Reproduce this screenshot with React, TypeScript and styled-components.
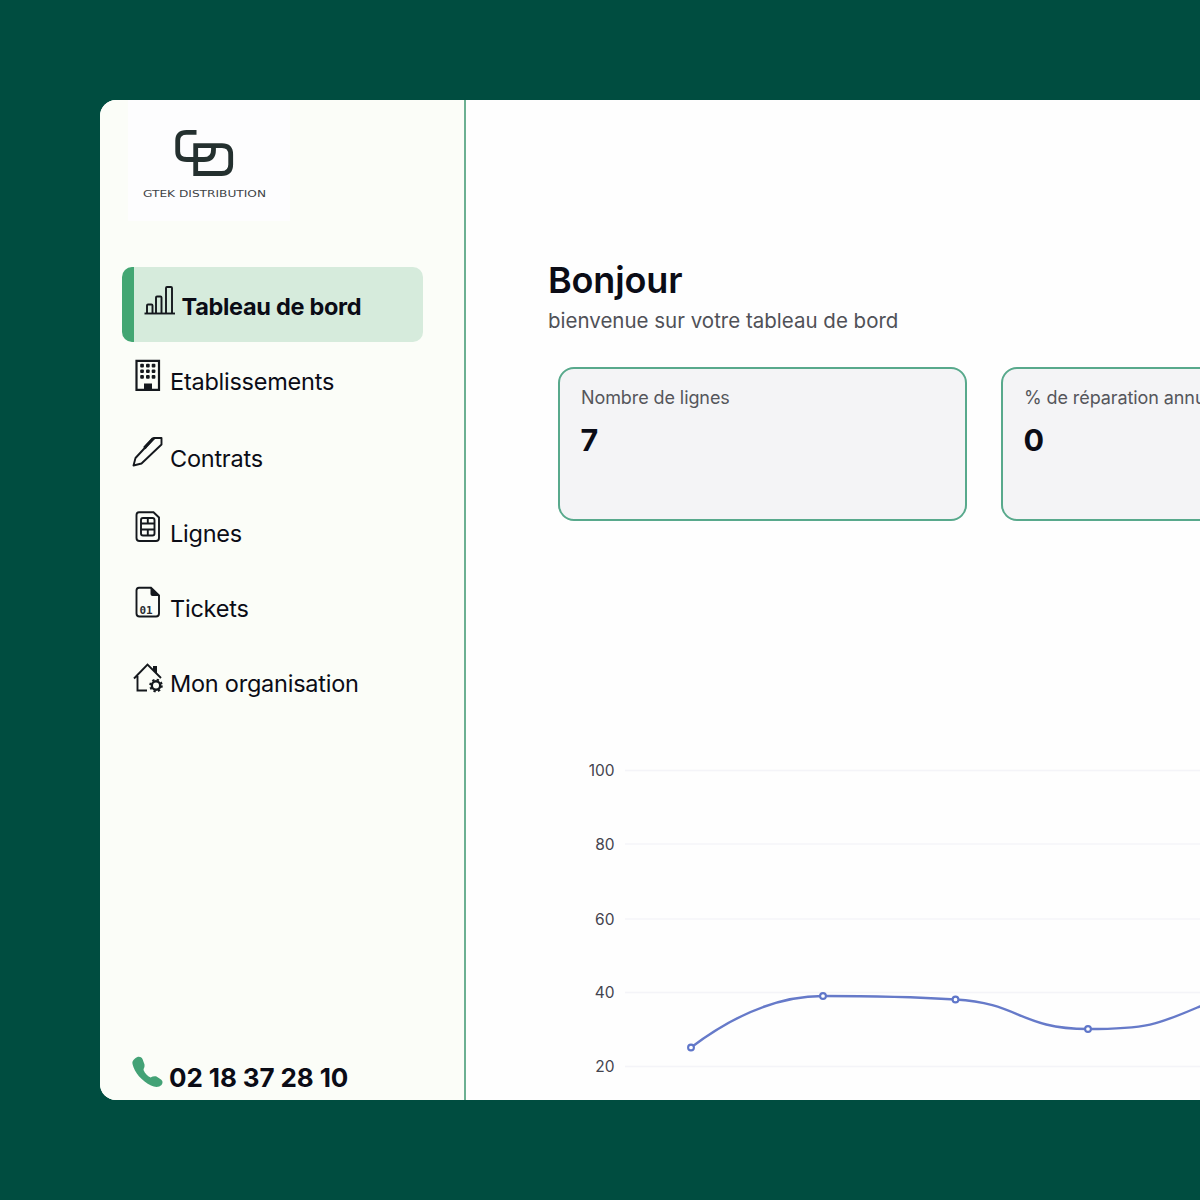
import React from "react";
import styled, { createGlobalStyle, css } from "styled-components";

const GlobalStyle = createGlobalStyle`
  *, *::before, *::after { box-sizing: border-box; }
  body {
    margin: 0;
    background: #004d40;
    font-family: Inter, "Liberation Sans", sans-serif;
    color: #0b0c16;
  }
`;

const Stage = styled.div`
  width: 100%;
  height: 1200px;
  padding: 100px 0 100px 100px;
  overflow: hidden;
  background: #004d40;
`;

const Window = styled.div`
  display: flex;
  height: 1000px;
  border-radius: 16px 0 0 16px;
  overflow: hidden;
  background: #fefefe;
`;

const Sidebar = styled.aside`
  display: flex;
  flex-direction: column;
  flex: none;
  width: 366px;
  background: #fbfdf8;
  border-right: 2px solid #6cb092;
`;

const LogoPanel = styled.div`
  width: 162px;
  height: 121px;
  margin-left: 28px;
  background: #fdfdfe;
`;

const Nav = styled.nav`
  display: flex;
  flex-direction: column;
  margin: 46px 41px 0 22px;
`;

const NavItem = styled.a<{ $active?: boolean }>`
  display: flex;
  align-items: center;
  height: 75.5px;
  padding-left: 10px;
  gap: 7px;
  font-size: 23.5px;
  letter-spacing: -0.24px;
  white-space: nowrap;
  ${(p) =>
    p.$active &&
    css`
      height: 75px;
      padding-bottom: 1px;
      gap: 6.5px;
      border-left: 12px solid #43a673;
      border-radius: 10px;
      background: #d6ebdc;
      font-weight: 700;
      letter-spacing: -0.3px;
    `}
`;

const NavIcon = styled.svg`
  flex: none;
  width: 31px;
  height: 32px;
  margin-bottom: 9px;
  overflow: visible;
  fill: none;
  stroke: #14181d;
  stroke-width: 1.9;
`;

const NavLabel = styled.span<{ $drop?: number }>`
  padding-top: ${(p) => 5 + (p.$drop ?? 0) * 2}px;
  line-height: 30px;
`;

const Phone = styled.div`
  display: flex;
  align-items: center;
  gap: 6px;
  margin-top: auto;
  padding: 0 0 0 32px;
  font-size: 26px;
  line-height: 32px;
  font-weight: 700;
  letter-spacing: -0.1px;
`;

const PhoneIcon = styled.svg`
  flex: none;
  width: 31px;
  height: 32px;
  margin-bottom: 12px;
  fill: #43a276;
`;

const Main = styled.main`
  display: flex;
  flex-direction: column;
  flex: 1;
  min-width: 0;
  padding: 157.5px 0 0 82px;
`;

const Title = styled.h1`
  margin: 0;
  font-size: 36px;
  line-height: 44px;
  font-weight: 600;
  letter-spacing: -0.15px;
`;

const Subtitle = styled.p`
  margin: 6.5px 0 0;
  font-size: 20.5px;
  line-height: 26px;
  letter-spacing: 0;
  color: #505157;
`;

const Cards = styled.div`
  display: flex;
  gap: 34px;
  margin: 33px 0 0 10px;
`;

const Card = styled.section`
  flex: none;
  width: 409px;
  height: 154px;
  padding: 18px 21px;
  border: 2px solid #58a98c;
  border-radius: 16px;
  background: #f4f4f6;
`;

const CardLabel = styled.div`
  font-size: 18px;
  line-height: 22px;
  letter-spacing: -0.09px;
  white-space: nowrap;
  color: #55565b;
`;

const CardValue = styled.div`
  margin-top: 11px;
  font-size: 30.5px;
  line-height: 40px;
  font-weight: 700;
  margin-left: -0.5px;
`;

const Chart = styled.svg`
  flex: none;
  display: block;
  width: 652px;
  height: 350px;
  margin-top: 229px;
  font-size: 15.5px;
`;

const Logo = () => (
  <svg width="162" height="121" viewBox="128 100 162 121">
    <g fill="none" stroke="#24302f" strokeWidth="4.800">
      <path d="M196.500 132.300H186.500Q177.700 132.300 177.700 140.500V151.500Q177.700 159.500 187 159.500H204Q213.500 159.500 213.500 150V146" />
      <path d="M195.700 145.700H222Q230.700 145.700 230.700 154.500V164.500Q230.700 173.500 221.500 173.500H195.700Z" />
    </g>
    <text
      x="143"
      y="196.600"
      fontSize="8.600"
      fontFamily="DejaVu Sans, sans-serif"
      fill="#3f4347"
      textLength="123"
      lengthAdjust="spacingAndGlyphs"
    >
      GTEK DISTRIBUTION
    </text>
  </svg>
);

const icons = {
  chart: (
    <>
      <path d="M0.500 29.500H31" />
      <path d="M3 29V21.500Q3 20.500 4 20.500H7.500Q8.500 20.500 8.500 21.500V29M12 29V13.500Q12 12.500 13 12.500H16.500Q17.500 12.500 17.500 13.500V29M22 29V4Q22 3 23 3H27Q28 3 28 4V29" />
    </>
  ),
  building: (
    <>
      <path d="M4.500 1.800H27V30.800H4.500Z" strokeWidth="2.200" />
      <g fill="#14181d" stroke="none">
        {[4.7, 10.4, 16.1].map((y) =>
          [8.2, 14, 19.7].map((x) => <rect key={`${x}-${y}`} x={x} y={y} width="3.700" height="3.700" rx="1" />)
        )}
        <path d="M12 24.500H20V31H12Z" />
      </g>
    </>
  ),
  pen: (
    <>
      <path d="M1.500 30.500L3.500 23L22 3H29.500V9.500L9.500 28.500Z" strokeLinejoin="round" />
      <path d="M14 13.500L12.500 12L20.500 3.500H23" />
      <path d="M13 12.500L21 4" strokeWidth="2.600" />
    </>
  ),
  sim: (
    <>
      <path d="M7 2.200H21.500L27 7.500V28Q27 31 24 31H7.500Q4.500 31 4.500 28V5Q4.500 2.200 7 2.200Z" />
      <rect x="9" y="8" width="13.500" height="17.500" rx="2" />
      <path d="M9 13.500H22.500M9 19.500H22.500M15.800 8V13.500M15.800 19.500V25.500" />
    </>
  ),
  file: (
    <>
      <path d="M7 1.700H19L27 9.500V27.500Q27 30.500 24 30.500H7.500Q4.500 30.500 4.500 27.500V4.500Q4.500 1.700 7 1.700Z" />
      <path d="M18.500 1.500L27.500 10H20.500Q18.500 10 18.500 8Z" fill="#14181d" stroke="none" />
      <text
        x="7.500"
        y="27.600"
        fontSize="11"
        fontFamily="DejaVu Sans Mono, monospace"
        fontWeight="700"
        fill="#2a2e33"
        stroke="none"
      >
        01
      </text>
    </>
  ),
  home: (
    <>
      <path d="M2 17.500L15.500 3.500L29 17M5.500 15V29.500H15M24 11.500V5" />
      <path d="M21 5H25V13L21 9Z" fill="#14181d" stroke="none" />
      <circle cx="24" cy="24.500" r="4.200" strokeWidth="2.400" />
      <circle cx="24" cy="24.500" r="5.900" strokeWidth="1.800" strokeDasharray="2.317 2.317" />
    </>
  ),
};

const items: { icon: keyof typeof icons; label: string; drop?: number }[] = [
  { icon: "chart", label: "Tableau de bord" },
  { icon: "building", label: "Etablissements" },
  { icon: "pen", label: "Contrats", drop: 1 },
  { icon: "sim", label: "Lignes", drop: 1 },
  { icon: "file", label: "Tickets" },
  { icon: "home", label: "Mon organisation" },
];

const cards = [
  { label: "Nombre de lignes", value: 7 },
  { label: "% de réparation annuel", value: 0 },
];

const ticks = [
  { value: 100, y: 770.5 },
  { value: 80, y: 844 },
  { value: 60, y: 919 },
  { value: 40, y: 992.5 },
  { value: 20, y: 1066.5 },
];

const points = [
  [691, 1047.5],
  [823, 996],
  [955.5, 999.5],
  [1088, 1029],
];

export default function App() {
  return (
    <Stage>
      <GlobalStyle />
      <Window>
        <Sidebar>
          <LogoPanel>
            <Logo />
          </LogoPanel>
          <Nav>
            {items.map((item, i) => (
              <NavItem key={item.label} $active={i === 0}>
                <NavIcon viewBox="0 0 31 32">{icons[item.icon]}</NavIcon>
                <NavLabel $drop={item.drop}>{item.label}</NavLabel>
              </NavItem>
            ))}
          </Nav>
          <Phone>
            <PhoneIcon viewBox="0 0 31 32">
              <path d="M3 2.500C6 0 9 .5 10.500 3L12.500 8.500C13 11 11.500 12.500 11.500 14C13 17.500 15.500 20 18.500 21.500C20.500 20.500 22.500 20 24.500 20.500L29 23.500C31 25 31 27 29.500 29C27 31.500 23 31.500 19 29.500C10 25 2.500 17 .5 8C0 5.500 1 4 3 2.500Z" />
            </PhoneIcon>
            02 18 37 28 10
          </Phone>
        </Sidebar>
        <Main>
          <Title>Bonjour</Title>
          <Subtitle>bienvenue sur votre tableau de bord</Subtitle>
          <Cards>
            {cards.map((card) => (
              <Card key={card.label}>
                <CardLabel>{card.label}</CardLabel>
                <CardValue>{card.value}</CardValue>
              </Card>
            ))}
          </Cards>
          <Chart viewBox="548 750 652 350">
            {ticks.map((t) => (
              <g key={t.value}>
                <path d={`M625 ${t.y}H1200`} stroke="#f4f4f8" strokeWidth="1.500" />
                <text x="614.500" y={t.y + 5.5} textAnchor="end" fill="#44444e">
                  {t.value}
                </text>
              </g>
            ))}
            <path
              d="M691 1047.500C730 1018 775 996 823 996C885 996 915 997 955.500 999.500C1020 1003 1020 1029 1088 1029C1155 1029 1160 1023 1215 1000"
              fill="none"
              stroke="#667ac9"
              strokeWidth="2.400"
            />
            {points.map(([x, y]) => (
              <circle key={x} cx={x} cy={y} r="2.900" fill="#fff" stroke="#5f76c9" strokeWidth="2.100" />
            ))}
          </Chart>
        </Main>
      </Window>
    </Stage>
  );
}
